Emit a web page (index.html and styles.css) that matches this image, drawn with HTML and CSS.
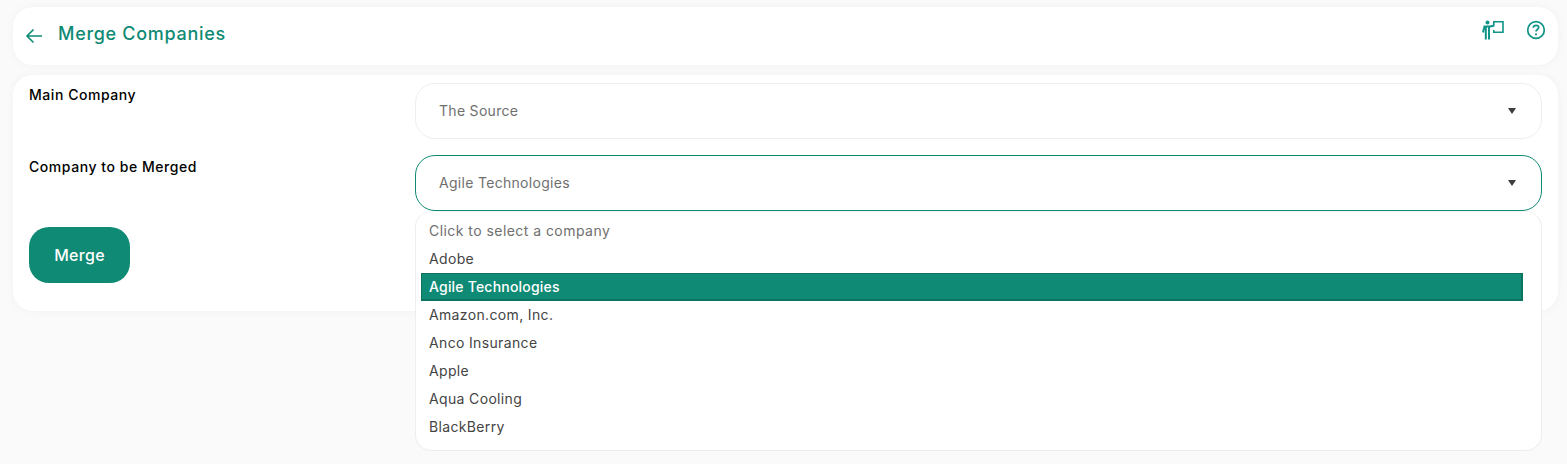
FILE: index.html
```html
<!DOCTYPE html>
<html lang="en">
<head>
    <meta charset="UTF-8">
    <meta name="viewport" content="width=device-width, initial-scale=1.0">
    <title>Merge Companies</title>
    <link rel="stylesheet" href="styles.css">
</head>
<body>

    <div class="header">
        <div class="header-title">
            <svg class="back-icon" width="18" height="16" viewBox="0 0 18 16" fill="none" stroke="#0f8a74" stroke-width="1.6">
                <path d="M17 8H2M8.5 1.5L2 8l6.500 6.500"/>
            </svg>
            <h1>Merge Companies</h1>
        </div>
        <div class="header-icons">
            <svg width="22" height="20" viewBox="0 0 22 20" fill="none" stroke="#0f9488" stroke-width="1.6">
                <circle cx="5.500" cy="2.500" r="2" fill="#0f9488" stroke="none"/>
                <path d="M11.800 5V1.800H21V12.200H11.800V10"/>
                <path d="M1 12.500L2.500 6.500H8L12.500 5.500" stroke-width="2"/>
                <path d="M3.800 7V19.500M7 7V19.500" stroke-width="2"/>
            </svg>
            <svg width="20" height="20" viewBox="0 0 20 20" fill="none" stroke="#0f9488" stroke-width="1.700">
                <circle cx="10" cy="10" r="8.300"/>
                <path d="M7.300 7.800C7.300 6.200 8.500 5.300 10 5.300C11.600 5.300 12.700 6.300 12.700 7.600C12.700 9.500 10 9.600 10 11.600"/>
                <circle cx="10" cy="14.300" r="1.100" fill="#0f9488" stroke="none"/>
            </svg>
        </div>
    </div>

    <div class="card">
        <div class="form-row">
            <label class="form-label">Main Company</label>
            <div class="select-box">
                <span>The Source</span>
                <span class="caret"></span>
            </div>
        </div>
        <div class="form-row">
            <label class="form-label">Company to be Merged</label>
            <div class="select-wrap">
                <div class="select-box open">
                    <span>Agile Technologies</span>
                    <span class="caret"></span>
                </div>
                <ul class="dropdown">
                    <li class="placeholder">Click to select a company</li>
                    <li>Adobe</li>
                    <li class="selected">Agile Technologies</li>
                    <li>Amazon.com, Inc.</li>
                    <li>Anco Insurance</li>
                    <li>Apple</li>
                    <li>Aqua Cooling</li>
                    <li>BlackBerry</li>
                </ul>
            </div>
        </div>
        <button class="merge-btn">Merge</button>
    </div>

</body>
</html>
```

FILE: styles.css
```css
body {
    font-family: Inter, "Open Sans", sans-serif;
    margin: 0;
    padding: 7px 9px 0 13px;
    background-color: #fafafa;
    height: 457px;
    overflow: hidden;
}

.header {
    height: 58px;
    background: white;
    border-radius: 20px;
    box-shadow: 0px 0px 10px rgba(0, 0, 0, 0.04);
    display: flex;
    justify-content: space-between;
    padding: 0 12px 0 12px;
    margin-bottom: 10px;
}

.header-title {
    display: flex;
    align-items: flex-start;
    gap: 15px;
}

.back-icon {
    margin-top: 21px;
}

h1 {
    margin: 15px 0 0 0;
    font-size: 18px;
    line-height: 24px;
    font-weight: 500;
    color: #0f8a74;
    letter-spacing: 0.7px;
}

.header-icons {
    display: flex;
    gap: 22px;
    padding-top: 13px;
}

.card {
    height: 236px;
    box-sizing: border-box;
    background: white;
    border-radius: 20px;
    box-shadow: 0px 0px 10px rgba(0, 0, 0, 0.04);
    padding: 8px 16px 0 16px;
}

.form-row {
    display: flex;
    margin-bottom: 16px;
}

.form-label {
    width: 386px;
    font-size: 14px;
    font-weight: 500;
    line-height: 24px;
    color: black;
    letter-spacing: 0.55px;
}

.select-wrap {
    flex: 1;
    position: relative;
}

.select-box {
    flex: 1;
    height: 56px;
    box-sizing: border-box;
    border: 1px solid #eeeeee;
    border-radius: 20px;
    background: white;
    display: flex;
    align-items: center;
    justify-content: space-between;
    padding: 0 25px 0 23px;
    font-size: 14px;
    line-height: 20px;
    color: #6f6f6f;
    letter-spacing: 0.3px;
}

.select-box.open {
    border-color: #0f8a74;
}

.caret {
    width: 0;
    height: 0;
    border-left: 4px solid transparent;
    border-right: 4px solid transparent;
    border-top: 6px solid #3c3c3c;
}

.dropdown {
    position: absolute;
    top: 56px;
    left: 0;
    right: 0;
    margin: 0;
    padding: 5px 18px 10px 5px;
    height: 240px;
    box-sizing: border-box;
    list-style: none;
    background: white;
    border: 1px solid #eeeeee;
    border-top-color: #f4f4f4;
    border-radius: 16px;
}

.dropdown li {
    height: 28px;
    box-sizing: border-box;
    padding-left: 8px;
    line-height: 28px;
    font-size: 14px;
    color: #444444;
    letter-spacing: 0.35px;
}

.dropdown li.placeholder {
    color: #6f6f6f;
    letter-spacing: 0.45px;
}

.dropdown li.selected {
    background: #0f8a74;
    border-style: solid;
    border-color: #0b7461;
    border-width: 1px 2px 2px 1px;
    padding-left: 7px;
    line-height: 26px;
    color: white;
    font-weight: 500;
    letter-spacing: 0.2px;
}

.merge-btn {
    display: block;
    margin-top: 16px;
    width: 101px;
    height: 56px;
    border: none;
    border-radius: 20px;
    background: #0f8a74;
    color: white;
    font-family: inherit;
    font-size: 16px;
    font-weight: 500;
    letter-spacing: 0.3px;
}
```
